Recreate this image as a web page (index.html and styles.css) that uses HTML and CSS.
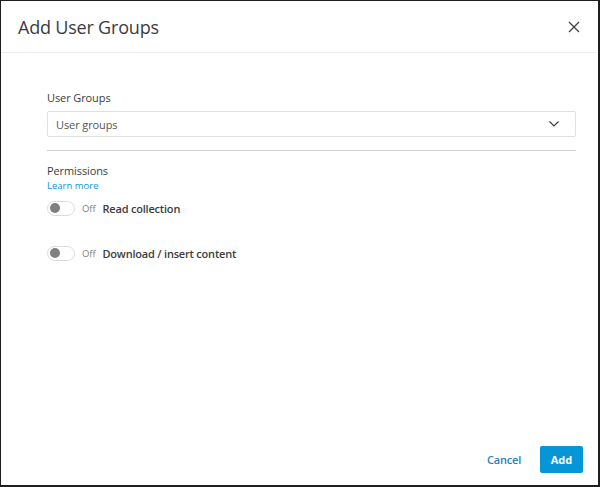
FILE: index.html
```html
<!DOCTYPE html>
<html>
<head>
<meta charset="utf-8">
<link rel="stylesheet" href="styles.css">
</head>
<body>
<div class="dialog">
  <header class="header">
    <h1 class="title">Add User Groups</h1>
    <button class="close" aria-label="Close">
      <svg width="12" height="12" viewBox="0 0 12 12"><path d="M1 1L11 11M11 1L1 11" stroke="#3c3c3c" stroke-width="1.2" fill="none"/></svg>
    </button>
  </header>
  <main class="body">
    <label class="label">User Groups</label>
    <div class="select">
      <span class="placeholder">User groups</span>
      <svg class="chev" width="10" height="6" viewBox="0 0 10 6"><path d="M0.5 0.5L5 5L9.5 0.5" stroke="#3c3c3c" stroke-width="1.2" fill="none"/></svg>
    </div>
    <hr class="divider">
    <div class="perm-title">Permissions</div>
    <a class="learn" href="#">Learn more</a>
    <div class="perm-row first">
      <span class="toggle"><span class="knob"></span></span>
      <span class="off">Off</span>
      <span class="perm-name">Read collection</span>
    </div>
    <div class="perm-row">
      <span class="toggle"><span class="knob"></span></span>
      <span class="off">Off</span>
      <span class="perm-name">Download / insert content</span>
    </div>
  </main>
  <footer class="footer">
    <button class="btn-cancel">Cancel</button>
    <button class="btn-add">Add</button>
  </footer>
</div>
</body>
</html>
```
FILE: styles.css
```css
* { box-sizing: border-box; }
html, body { margin: 0; padding: 0; }
body {
  width: 600px;
  height: 487px;
  font-family: "Open Sans", "Noto Sans", sans-serif;
  color: #3c3c3c;
  background: #fff;
}
.dialog {
  width: 600px;
  height: 487px;
  border-style: solid;
  border-color: #1e1e1e;
  border-width: 1px 2px 2px 1px;
  display: flex;
  flex-direction: column;
  background: #fff;
}
.header {
  height: 52px;
  border-bottom: 1px solid #eeeeee;
  display: flex;
  align-items: center;
  justify-content: space-between;
  padding: 0 16px 0 16px;
  margin: 0 1px;
}
.title {
  margin: 0;
  font-size: 18px;
  font-weight: 400;
  color: #3c3c3c;
  letter-spacing: -0.2px;
}
.close {
  background: none;
  border: 0;
  padding: 0;
  width: 14px;
  height: 14px;
  display: flex;
  align-items: center;
  justify-content: center;
  cursor: pointer;
}
.body {
  flex: 1;
  padding: 36px 22px 0 46px;
  display: flex;
  flex-direction: column;
}
.label {
  font-size: 11px;
  line-height: 18px;
  color: #3c3c3c;
  margin-bottom: 4px;
  margin-top: 0;
  letter-spacing: -0.1px;
}
.select {
  height: 26px;
  border: 1px solid #e0e0e0;
  border-radius: 2px;
  display: flex;
  align-items: center;
  justify-content: space-between;
  padding: 0 16px 0 8px;
}
.placeholder {
  font-size: 11px;
  color: #555;
  letter-spacing: -0.1px;
}
.divider {
  border: 0;
  border-top: 1px solid #cfcfcf;
  margin: 13px 0 0 0;
  width: 100%;
}
.perm-title {
  font-size: 11px;
  line-height: 16px;
  margin-top: 12px;
  letter-spacing: -0.1px;
}
.learn {
  font-size: 9.5px;
  line-height: 14px;
  color: #0696d7;
  text-decoration: none;
  margin-top: 0;
  align-self: flex-start;
}
.perm-row {
  display: flex;
  align-items: center;
  height: 16px;
  margin-top: 29px;
}
.perm-row.first { margin-top: 7px; }
.toggle {
  width: 28px;
  height: 15px;
  border: 1px solid #dcdcdc;
  border-radius: 8px;
  display: flex;
  align-items: center;
  padding-left: 2px;
  background: #fff;
}
.knob {
  width: 10px;
  height: 10px;
  border-radius: 50%;
  background: #808080;
}
.off {
  font-size: 9.5px;
  color: #808080;
  margin-left: 7px;
  letter-spacing: -0.1px;
}
.perm-name {
  font-size: 11px;
  font-weight: 600;
  color: #3c3c3c;
  margin-left: 7px;
  letter-spacing: -0.2px;
}
.footer {
  display: flex;
  justify-content: flex-end;
  align-items: center;
  gap: 19px;
  padding: 0 15px 12px 0;
}
.btn-cancel {
  background: none;
  border: 0;
  font-family: inherit;
  font-size: 11px;
  font-weight: 600;
  color: #2a82c0;
  padding: 0;
  cursor: pointer;
  letter-spacing: -0.2px;
}
.btn-add {
  background: #0696d7;
  border: 0;
  border-radius: 2px;
  width: 43px;
  height: 27px;
  color: #fff;
  font-family: inherit;
  font-size: 11px;
  font-weight: 700;
  cursor: pointer;
}
```
